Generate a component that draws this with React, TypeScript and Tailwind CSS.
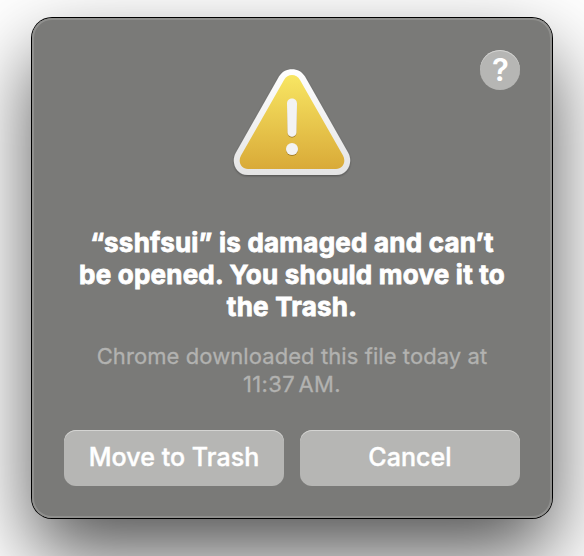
function WarningIcon() {
  return (
    <svg className="block h-[120px] w-[124px] overflow-visible" viewBox="0 0 124 120" aria-hidden="true">
      <defs>
        <linearGradient id="rim" x1="0" y1="0" x2="0" y2="1">
          <stop offset="0" stopColor="#ffffff" />
          <stop offset="1" stopColor="#e4e4e4" />
        </linearGradient>
        <linearGradient id="fill" x1="0" y1="0" x2="0" y2="1">
          <stop offset="0" stopColor="#f8e663" />
          <stop offset="1" stopColor="#d9aa38" />
        </linearGradient>
        <filter id="drop" x="-10%" y="-10%" width="120%" height="125%">
          <feDropShadow dx="0" dy="1" stdDeviation="1.1" floodColor="#000" floodOpacity="0.35" />
        </filter>
        <filter id="markDrop" x="-40%" y="-20%" width="180%" height="140%">
          <feDropShadow dx="0" dy="1" stdDeviation="0.5" floodColor="#74530c" floodOpacity="0.55" />
        </filter>
      </defs>
      <path
        d="M49 11.5C54.5 1.7 69.5 1.7 75 11.5L118.3 88C123.5 97.5 117.5 110 106 110H18C6.5 110 0.5 97.5 5.7 88Z"
        fill="url(#rim)"
        filter="url(#drop)"
      />
      <path
        d="M54 15C57.5 8.3 66.5 8.3 70 15L113 90.5C116.5 97 112.7 104 106 104H18C11.3 104 7.5 97 11 90.5Z"
        fill="url(#fill)"
      />
      <g fill="#f3f3f3" filter="url(#markDrop)">
        <path d="M57 38.5C57 31.7 67 31.7 67 38.5L66.4 67.5C66.3 73 57.7 73 57.6 67.5Z" />
        <circle cx="62" cy="84" r="6" />
      </g>
    </svg>
  );
}

function DialogButton({ label }: { label: string }) {
  return (
    <button className="flex h-14 flex-1 items-center justify-center rounded-xl bg-[#b6b6b4] text-[25px] font-medium tracking-[0.05px] text-white shadow-[inset_0_1px_0_#d4d4d2] [-webkit-text-stroke:0.4px_#fff]">
      <span className="-mt-0.5 pt-px">{label}</span>
    </button>
  );
}

export default function App() {
  return (
    <main className="h-[556px] w-[584px] overflow-hidden bg-white px-8 pt-[18px] font-['Inter',sans-serif]">
      <section
        role="alertdialog"
        className="flex h-[500px] w-[520px] flex-col items-center rounded-[20px] bg-[#7a7a78] px-8 pt-8 shadow-[inset_0_0_0_2px_#8f8f8d,0_0_0_1px_#000,0_36px_80px_0_rgba(0,0,0,0.68)]"
      >
        <header className="grid h-[140px] w-full grid-cols-[40px_1fr_40px] items-start">
          <span />
          <div className="flex justify-center pt-[15px]">
            <WarningIcon />
          </div>
          <button
            aria-label="Help"
            className="flex size-10 items-center justify-center rounded-full bg-[#b6b6b4] shadow-[inset_0_1px_0_#d4d4d2]"
          >
            <span className="pl-px text-[31px] leading-10 font-semibold text-white">?</span>
          </button>
        </header>
        <h1 className="mt-[37px] flex flex-col items-center text-[26px] leading-8 font-bold tracking-[0.22px] whitespace-nowrap text-white [-webkit-text-stroke:0.8px_#fff]">
          <span>“sshfsui” is damaged and can’t</span>
          <span>be opened. You should move it to</span>
          <span>the Trash.</span>
        </h1>
        <p className="mt-[19px] flex flex-col items-center text-[22px] leading-7 tracking-[0.08px] whitespace-nowrap text-[#b2b2b0] [-webkit-text-stroke:0.3px_#b2b2b0]">
          <span>Chrome downloaded this file today at</span>
          <span className="tracking-[0.35px] [word-spacing:-3px]">11:37 AM.</span>
        </p>
        <footer className="mt-8 flex w-full gap-4">
          <DialogButton label="Move to Trash" />
          <DialogButton label="Cancel" />
        </footer>
      </section>
    </main>
  );
}
